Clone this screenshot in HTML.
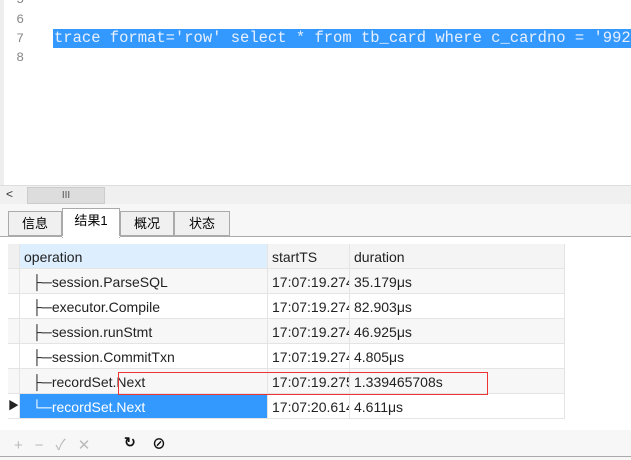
<!DOCTYPE html><html><head><meta charset="utf-8"><style>
body{margin:0;width:631px;height:460px;overflow:hidden;background:#fff;font-family:"Liberation Sans","Noto Sans CJK SC",sans-serif;position:relative}
.a{position:absolute}
.mono{font-family:"Liberation Mono",monospace;font-size:15.5px;color:#555}
.ln{left:0;width:46px;text-align:right;color:#888;font-family:"Liberation Mono",monospace;font-size:13px}
.tab{top:211px;height:25px;border:1px solid #aaa;background:#f0f0f0;font-size:13px;line-height:24px;text-align:center;box-sizing:border-box}
.cell{height:25px;line-height:26px;font-size:14px;color:#222;box-sizing:border-box;border-right:1px solid #e4e4e4;border-bottom:1px solid #e4e4e4;padding-left:4px;white-space:nowrap;overflow:hidden}
</style></head><body>
<div class="a" style="left:0;top:0;width:4px;height:185px;background:#eee"></div>
<div class="a ln" style="top:-8px;left:-22px">5</div>
<div class="a ln" style="top:12px;left:-22px">6</div>
<div class="a ln" style="top:31px;left:-22px">7</div>
<div class="a ln" style="top:50px;left:-22px">8</div>
<div class="a" style="left:53px;top:29px;width:578px;height:19px;background:#3399ff"></div>
<div class="a mono" style="left:54px;top:29px;color:#e8f0ff;white-space:pre">trace format='row' select * from tb_card where c_cardno = '9922</div>
<div class="a" style="left:0;top:185px;width:631px;height:19px;background:#f0f0f0;border-top:1px solid #ddd"></div>
<div class="a" style="left:6px;top:187px;font-size:12px;color:#333">&lt;</div>
<div class="a" style="left:27px;top:187px;width:76px;height:15px;background:#ddd;border:1px solid #ccc;text-align:center;font-size:10px;line-height:15px;color:#555">III</div>
<div class="a" style="left:0;top:204px;width:631px;height:33px;background:#f7f7f7"></div>
<div class="a tab" style="left:8px;width:54px">信息</div>
<div class="a tab" style="left:62px;top:208px;height:30px;width:58px;background:#fff;border-bottom:none">结果1</div>
<div class="a tab" style="left:120px;width:54px">概况</div>
<div class="a tab" style="left:174px;width:56px">状态</div>
<div class="a" style="left:0;top:236px;width:631px;height:1px;background:#aaa"></div>
<div class="a" style="left:62px;top:236px;width:58px;height:1px;background:#fff"></div>
<div class="a" style="left:8px;top:244px;width:557px">
<div style="display:flex"><div class="cell" style="width:12px;background:#f0f0f0;padding:0"></div><div class="cell" style="width:248px;background:#ddeeff">operation</div><div class="cell" style="width:82px;background:#f4f4f4">startTS</div><div class="cell" style="width:215px;background:#f4f4f4">duration</div></div>
<div style="display:flex;background:#f7f7f7"><div class="cell" style="width:12px;padding:0"></div><div class="cell" style="width:248px;padding-left:12px">├─session.ParseSQL</div><div class="cell" style="width:82px">17:07:19.274</div><div class="cell" style="width:215px">35.179μs</div></div>
<div style="display:flex"><div class="cell" style="width:12px;padding:0"></div><div class="cell" style="width:248px;padding-left:12px">├─executor.Compile</div><div class="cell" style="width:82px">17:07:19.274</div><div class="cell" style="width:215px">82.903μs</div></div>
<div style="display:flex;background:#f7f7f7"><div class="cell" style="width:12px;padding:0"></div><div class="cell" style="width:248px;padding-left:12px">├─session.runStmt</div><div class="cell" style="width:82px">17:07:19.274</div><div class="cell" style="width:215px">46.925μs</div></div>
<div style="display:flex"><div class="cell" style="width:12px;padding:0"></div><div class="cell" style="width:248px;padding-left:12px">├─session.CommitTxn</div><div class="cell" style="width:82px">17:07:19.274</div><div class="cell" style="width:215px">4.805μs</div></div>
<div style="display:flex;background:#f7f7f7"><div class="cell" style="width:12px;padding:0"></div><div class="cell" style="width:248px;padding-left:12px">├─recordSet.Next</div><div class="cell" style="width:82px">17:07:19.275</div><div class="cell" style="width:215px">1.339465708s</div></div>
<div style="display:flex"><div class="cell" style="width:12px;padding:0;font-size:11px;line-height:25px;text-align:center">▶</div><div class="cell" style="width:248px;padding-left:12px;background:#3399ff;color:#fff">└─recordSet.Next</div><div class="cell" style="width:82px">17:07:20.614</div><div class="cell" style="width:215px">4.611μs</div></div>
</div>
<div class="a" style="left:118px;top:372px;width:370px;height:23px;border:1px solid #e33;box-sizing:border-box"></div>
<div class="a" style="left:0;top:430px;width:631px;height:30px;background:#f7f7f7"></div>
<div class="a" style="left:14px;top:434px;font-size:15px;color:#bbb;letter-spacing:12px">+−✓✕</div>
<div class="a" style="left:124px;top:434px;font-size:14px;font-weight:bold;color:#111">↻</div>
<div class="a" style="left:152px;top:434px;font-size:14px;font-weight:bold;color:#111">⊘</div>
<div class="a" style="left:0;top:456px;width:631px;height:1px;background:#aaa"></div>
</body></html>
